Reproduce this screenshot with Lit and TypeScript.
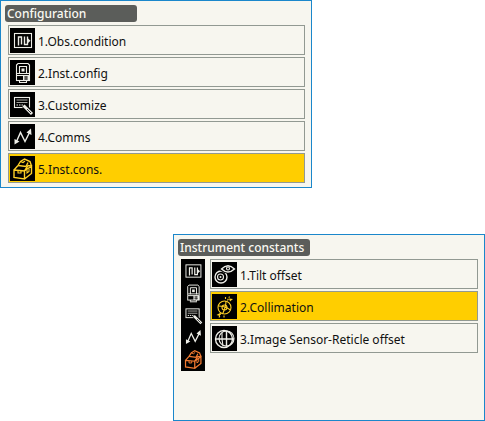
import { LitElement, html, css, svg, type TemplateResult } from "lit";
import { customElement, property } from "lit/decorators.js";

type Row = { icon: string; label: string };

const icons: Record<string, TemplateResult> = {
  condition: svg`
    <rect x="4.5" y="5.5" width="17" height="14"/>
    <path class="mid" d="M8.5 17.5V9H11.500V16.500M14.500 8.500V16.500H17.500V8.500"/>
    <path class="solid" d="M17.500 10L20.500 12.800L17.500 15.500Z"/>`,
  instrument: svg`
    <path d="M6.5 15V5L8 3.500H18L19.500 5V15M9.500 14V6.500H16.500V14M7 13.500H19"/>
    <path class="solid" d="M11.500 8.500h3v3h-3z"/>
    <rect x="6.500" y="15.500" width="13" height="5"/>
    <path class="solid" d="M13 15.500h6.500v5H13z"/>
    <path class="cut" d="M14 17h4M14 19h4M16 16v4"/>
    <path d="M9 22.500H17M9.500 20.500V22M16.500 20.500V22"/>`,
  customize: svg`
    <rect x="4.500" y="5.500" width="15" height="10"/>
    <path d="M6.500 8H17.500M6.500 10.500H17.500" opacity=".7"/>
    <path d="M6.500 13H13" stroke-dasharray="1.500 1"/>
    <path class="outline" d="M14 13.500L21.500 21"/>
    <path class="bold" d="M13.500 13.500L22 22"/>
    <path class="cut" d="M17 17L21 21"/>`,
  comms: svg`
    <path class="mid" d="M6.500 17.500L10.500 8.500L15 17.500L20 7.500"/>
    <path class="solid" d="M4.500 15V20.500L9.500 17.500ZM16.500 8.500L21 4.500L21.500 11Z"/>`,
  toolbox: svg`
    <path class="mid" d="M4 14L14.500 15V23L4 21.500ZM14.500 15L21.500 10V17.500L14.500 23M4 14L8 9.500M14.500 15L18 9.500L21.500 10"/>
    <path class="mid" d="M8 9.500L10.500 5.500L14.500 3L20 5.500L21.500 10M8 9.500L16 10.500L18 6.500"/>
    <path d="M10.500 5.500L13 6.500L15 5M8 14.500V17H11V15M17 14V17L19 15.500V12.500"/>`,
  tilt: svg`
    <circle class="mid" cx="9" cy="15" r="6"/>
    <circle cx="8.500" cy="15" r="3"/>
    <circle class="solid" cx="8.500" cy="15" r="1"/>
    <path class="outline" d="M10.500 7Q16 3 21.500 7Q16 11 10.500 7Z"/>
    <path class="mid" d="M9.500 7Q16 0.500 22.500 7Q16 13 9.500 7Z"/>
    <circle cx="16" cy="6.500" r="1.500"/>`,
  collimation: svg`
    <circle cx="12.500" cy="13.500" r="6.500"/>
    <path d="M10.500 20Q14 13 14 7M6.500 12Q13 12 18.500 16"/>
    <circle cx="12.500" cy="13.500" r="2.500"/>
    <path d="M15.500 6.500L17.500 2.500M7 23.500L9 19M12 21.500V24M13.500 3V6" stroke-dasharray="2 1"/>
    <path class="solid" d="M17 4.500L21 5L18 7.500ZM4.500 21L8 19V22Z"/>`,
  reticle: svg`
    <circle class="mid" cx="12" cy="13" r="8.500"/>
    <circle cx="14.500" cy="12.500" r="7.500"/>
    <path class="mid" d="M4 13H22M14.500 5V20.500"/>
    <path d="M10 7Q9.500 13 11 20"/>`,
};

@customElement("device-icon")
class DeviceIcon extends LitElement {
  @property() name = "";

  static styles = css`
    :host { display: block; width: 100%; height: 100%; }
    svg { display: block; width: 100%; height: 100%; fill: none; stroke: currentColor; stroke-width: 1.1; }
    .solid { fill: currentColor; stroke: none; }
    .mid { stroke-width: 1.4; }
    .bold { stroke-width: 3; }
    .outline { stroke: #000; fill: #000; stroke-width: 5; }
    .cut { stroke: #000; stroke-width: 0.8; }
  `;

  render() {
    return html`<svg viewBox="0 0 25 25" aria-hidden="true">${icons[this.name]}</svg>`;
  }
}

@customElement("app-root")
class AppRoot extends LitElement {
  static styles = css`
    :host {
      display: block;
      background: #fff;
      color: #111;
      font: 12px/16px "Noto Sans", "DejaVu Sans", sans-serif;
    }
    * { box-sizing: border-box; }
    .page { display: flex; flex-direction: column; gap: 46px; }
    .panel {
      min-height: 187px;
      padding: 4px 6px 4px 4px;
      border: 1px solid #1b87cb;
      background: #f7f6ef;
    }
    .first { margin-right: 173px; }
    .second { margin-left: 173px; }
    .title {
      width: 132px;
      margin: 0 0 3px;
      padding: 1px 2px 0;
      border-radius: 3px;
      background: #5b5d5a;
      color: #faf9f2;
      font: 500 12px/16px "Noto Sans", "DejaVu Sans", sans-serif;
      white-space: nowrap;
    }
    .body { display: flex; align-items: flex-start; gap: 5px; padding-left: 3px; }
    .tabs {
      display: flex;
      flex-direction: column;
      flex: none;
      padding: 1px 0;
      background: #000;
    }
    .tab {
      width: 24px;
      height: 22px;
      padding: 0;
      border: 0;
      background: #000;
      color: #eeeee8;
    }
    .tab.current { color: #f47b30; }
    .list {
      display: flex;
      flex: 1;
      flex-direction: column;
      gap: 2px;
      min-width: 0;
      margin: 0;
      padding: 0;
      list-style: none;
    }
    .row {
      display: flex;
      align-items: center;
      gap: 3px;
      width: 100%;
      height: 30px;
      padding: 0 1px;
      border: 1px solid #929992;
      background: transparent;
      color: inherit;
      font: inherit;
      text-align: left;
      white-space: nowrap;
    }
    .row.current { background: #ffce00; }
    .icon { flex: none; width: 25px; height: 25px; background: #000; color: #eeeee8; }
    .current .icon { color: #ffd026; }
    .label { padding-top: 4px; }
  `;

  private main: Row[] = [
    { icon: "condition", label: "1.Obs.condition" },
    { icon: "instrument", label: "2.Inst.config" },
    { icon: "customize", label: "3.Customize" },
    { icon: "comms", label: "4.Comms" },
    { icon: "toolbox", label: "5.Inst.cons." },
  ];

  private constants: Row[] = [
    { icon: "tilt", label: "1.Tilt offset" },
    { icon: "collimation", label: "2.Collimation" },
    { icon: "reticle", label: "3.Image Sensor-Reticle offset" },
  ];

  private list(rows: Row[], current: number) {
    return html`<ul class="list">
      ${rows.map((row, i) => html`<li>
        <button class="row ${i === current ? "current" : ""}">
          <span class="icon"><device-icon name=${row.icon}></device-icon></span>
          <span class="label">${row.label}</span>
        </button>
      </li>`)}
    </ul>`;
  }

  render() {
    return html`<main class="page">
      <section class="panel first">
        <h2 class="title">Configuration</h2>
        <div class="body">${this.list(this.main, 4)}</div>
      </section>
      <section class="panel second">
        <h2 class="title">Instrument constants</h2>
        <div class="body">
          <nav class="tabs">
            ${this.main.map((row, i) => html`<button
              class="tab ${i === 4 ? "current" : ""}" aria-label=${row.label}
            ><device-icon name=${row.icon}></device-icon></button>`)}
          </nav>
          ${this.list(this.constants, 1)}
        </div>
      </section>
    </main>`;
  }
}
